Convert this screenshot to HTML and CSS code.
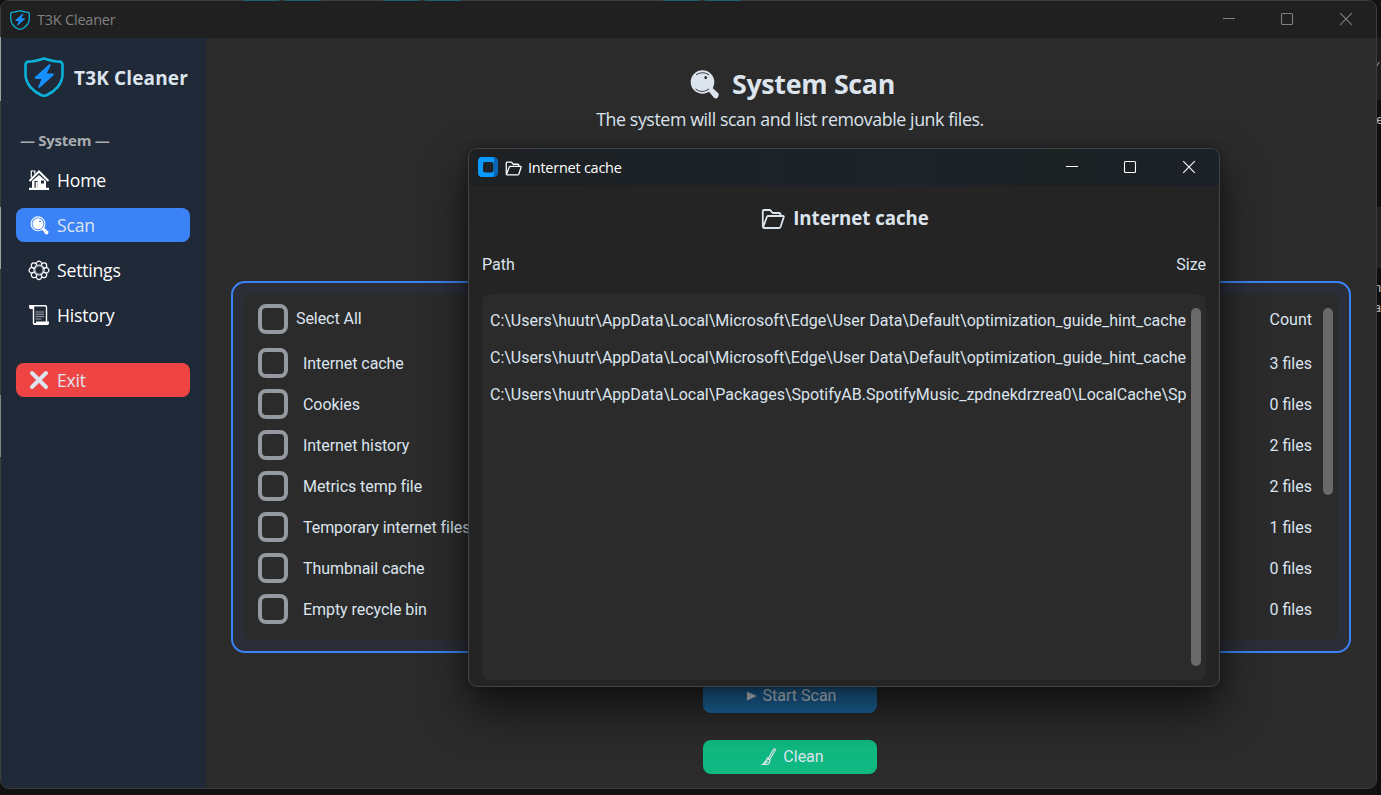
FILE: index.html
```html
<!DOCTYPE html>
<html lang="en">
<head>
<meta charset="utf-8">
<title>T3K Cleaner</title>
<link rel="stylesheet" href="styles.css">
</head>
<body>
<svg width="0" height="0" class="defs">
  <symbol id="shield" viewBox="0 0 40 40">
    <path d="M20 1.4C15 3 9 4.600 4.500 4.600C2.500 4.600 1.500 6 1.500 8v9C1.500 27 9 34.500 17 38q3 1.500 6 0C31 34.500 38.500 27 38.500 17V8c0-2-1-3.400-3-3.400C31 4.600 25 3 20 1.400z" fill="none" stroke="#0bb1d8" stroke-width="2.600"/>
    <path d="M25.500 7L10.500 20.500l1 1.500h6L14 30.500l1.500.6L30 17.800l-.8-1.300h-6.400L26.800 8z" fill="#1690ff"/>
  </symbol>
  <symbol id="glass" viewBox="0 0 30 30">
    <circle cx="12.500" cy="12" r="11.800" fill="currentColor"/>
    <path d="M19 18l2-1.500 7.200 6.700q1.500 2-.2 4t-4 .6l-6-7.200z" fill="currentColor"/>
    <path d="M6 4.800q6.500-4.200 13 0M5.500 19q6.500 5 13.500 0" fill="none" stroke="var(--hole)" stroke-width=".9"/>
    <ellipse cx="15.700" cy="7.600" rx="1.300" ry="1.700" fill="var(--hole)"/>
  </symbol>
  <symbol id="folder" viewBox="0 0 24 20">
    <path d="M1.800 17.500V2.200Q1.800 1 3 1h6l2.800 3H18q1.500 0 1.700 2.500M2 18.500L6 7.800Q6.300 7 7.500 7H22q1 0 .7 1.200L19.500 18q-.4 1-1.500 1H3q-1.200 0-1.200-1.500" fill="none" stroke="currentColor" stroke-width="1.800"/>
  </symbol>
</svg>
<div class="desk-hints"><i></i><i></i><i></i></div>
<div class="left-hints"><i></i><i></i><i></i></div>
<div class="behind"><p class="b1">⁄</p><p class="b2">ne</p><p class="b3">n_<br>a</p></div>

<div class="window">
  <header class="titlebar">
    <svg class="app-icon"><use href="#shield"/></svg>
    <span class="ui app-title">T3K Cleaner</span>
    <div class="controls">
      <svg viewBox="0 0 12 12"><path d="M0 5.500h12"/></svg>
      <svg viewBox="0 0 12 12"><rect x=".5" y=".5" width="11" height="11" rx="1"/></svg>
      <svg viewBox="0 0 12 12"><path d="M.2.2l11.600 11.600M11.800.2L.2 11.800"/></svg>
    </div>
  </header>
  <div class="body">
    <nav class="sidebar ui">
      <div class="brand"><svg class="logo"><use href="#shield"/></svg><b>T3K Cleaner</b></div>
      <div class="section">— System —</div>
      <a class="item"><svg viewBox="0 0 22 22"><path d="M11 6l7 6v7H4v-7z" fill="#fff"/><path d="M1.500 12L11 2.500l9.500 9.500" fill="none" stroke="#fff" stroke-width="2"/><path d="M3.300 8.500V2h3.500v3" fill="none" stroke="#fff" stroke-width="1.200"/><path d="M6.500 12h3v7h-3zM13 11.500h3v3h-3z" fill="#202937"/><path d="M7.700 13h1.800v6H7.700z" fill="#fff"/><path d="M1 18.700h20v2.300H1z" fill="#fff"/></svg><span>Home</span></a>
      <a class="item active"><svg class="small-glass" viewBox="0 0 19 19"><circle cx="8" cy="7.800" r="6.900" fill="none" stroke="currentColor" stroke-width="1.100"/><circle cx="8" cy="7.800" r="5.500" fill="currentColor"/><path d="M11.500 12.800l2-1.600 4.500 4q1 1.300 0 2.500t-2.600.4z" fill="currentColor"/><circle cx="10" cy="5.300" r=".9" fill="#3b82f6"/></svg><span>Scan</span></a>
      <a class="item"><svg viewBox="0 0 22 22"><g fill="none" stroke="#fff" stroke-width="1.200"><circle cx="11" cy="11" r="5"/><circle cx="11" cy="11" r="4" stroke="#99a0aa"/><path d="M8.700 6.300a2.700 2.700 0 1 1 4.600 0a2.700 2.700 0 1 1 3 3a2.700 2.700 0 1 1 0 4a2.700 2.700 0 1 1-3 3a2.700 2.700 0 1 1-4.600 0a2.700 2.700 0 1 1-3-3a2.700 2.700 0 1 1 0-4a2.700 2.700 0 1 1 3-3z"/></g></svg><span>Settings</span></a>
      <a class="item"><svg viewBox="0 0 22 22"><path d="M3 1.700h14q1.500 0 1.500 1.500V18M5.500 2v17.500" fill="none" stroke="#fff" stroke-width="1.400"/><path d="M1 1h4.500v4H2Q1 4 1 1zM8 17.500h13q.4 3.500-2 3.500H6.500q-2 0-1.500-2h3z" fill="#fff"/><path d="M7.500 8h8.500M7.500 10.300h8.500M7.500 12.600h8.500M7.500 15h6" stroke="#a4a9b1" stroke-width="1"/></svg><span>History</span></a>
      <a class="item exit"><svg viewBox="0 0 22 22"><path d="M4 4l14 14M18 4L4 18" stroke="#dce4ee" stroke-width="4" stroke-linecap="round"/></svg><span>Exit</span></a>
    </nav>
    <main class="main">
      <h1 class="ui"><svg><use href="#glass"/></svg><span>System Scan</span></h1>
      <p class="sub ui"><span>The system will scan and list removable junk files.</span></p>
      <section class="panel">
        <div class="list">
          <div class="rows">
            <div class="row head"><i></i><span>Select All</span><em>Count</em></div>
            <div class="row"><i></i><span>Internet cache</span><em>3 files</em></div>
            <div class="row"><i></i><span>Cookies</span><em>0 files</em></div>
            <div class="row"><i></i><span>Internet history</span><em>2 files</em></div>
            <div class="row"><i></i><span>Metrics temp file</span><em>2 files</em></div>
            <div class="row"><i></i><span>Temporary internet files</span><em>1 files</em></div>
            <div class="row"><i></i><span>Thumbnail cache</span><em>0 files</em></div>
            <div class="row"><i></i><span>Empty recycle bin</span><em>0 files</em></div>
          </div>
          <div class="thumb"></div>
        </div>
      </section>
      <button class="btn start"><svg viewBox="0 0 10 10"><path d="M0 .5l10 4.500-10 4.500z"/></svg>Start Scan</button>
      <button class="btn clean"><svg viewBox="0 0 16 18"><path d="M12.500 1.500q1.500-1.200 2 .3L8.500 12 7 11zM6.500 10L9 12q0 3-2.500 4.500H1.500Q5 14 6.500 10zM3.500 16l3-3" fill="none" stroke="currentColor" stroke-width="1.200"/></svg>Clean</button>
    </main>
  </div>
</div>

<div class="dialog">
  <header class="dialog-bar">
    <svg class="ctk" viewBox="0 0 20 20"><rect width="20" height="20" rx="4.500" fill="#0866b5"/><path d="M4.500 0H14q2 0 2 3v14q0 3-2 3H4.500Q0 20 0 15.500v-11Q0 0 4.500 0z" fill="#0a99fe"/><rect x="5" y="5" width="10.500" height="10.500" rx="2" fill="#1c2227"/></svg>
    <svg class="bar-folder"><use href="#folder"/></svg>
    <span class="ui bar-title">Internet cache</span>
    <div class="controls">
      <svg viewBox="0 0 12 12"><path d="M0 5.500h12"/></svg>
      <svg viewBox="0 0 12 12"><rect x=".5" y=".5" width="11" height="11" rx="1"/></svg>
      <svg viewBox="0 0 12 12"><path d="M.2.2l11.600 11.600M11.800.2L.2 11.800"/></svg>
    </div>
  </header>
  <h2 class="ui"><svg><use href="#folder"/></svg><span>Internet cache</span></h2>
  <div class="cols"><span>Path</span><span>Size</span></div>
  <div class="files">
    <div class="paths">
      <p>C:\Users\huutr\AppData\Local\Microsoft\Edge\User Data\Default\optimization_guide_hint_cache</p>
      <p>C:\Users\huutr\AppData\Local\Microsoft\Edge\User Data\Default\optimization_guide_hint_cache</p>
      <p>C:\Users\huutr\AppData\Local\Packages\SpotifyAB.SpotifyMusic_zpdnekdrzrea0\LocalCache\Sp</p>
    </div>
    <div class="thumb"></div>
  </div>
</div>
</body>
</html>
```
FILE: styles.css
```css
* { box-sizing: border-box; }
body { margin: 0; width: 1381px; height: 795px; overflow: hidden; position: relative; background: #121212; color: #dce4ee; font: 16px/20px Roboto, sans-serif; }
h1, h2, p { margin: 0; }
.defs { position: absolute; }
.ui { font-family: "Open Sans", "Noto Sans", sans-serif; white-space: nowrap; }

/* desktop showing around the window edges */
.desk-hints { position: absolute; z-index: 2; top: 0; left: 243px; display: flex; gap: 62px; }
.desk-hints i { width: 78px; height: 1px; background: linear-gradient(90deg, #215e70 36px, #333 36px, #333 42px, #215e70 42px); }
.desk-hints i:last-child { margin-left: 140px; }
.left-hints { position: absolute; z-index: 2; left: 0; top: 37px; width: 1px; display: flex; flex-direction: column; }
.left-hints i { height: 64px; background: #a0a0a0; }
.left-hints i:nth-child(2) { margin-top: 106px; height: 62px; }
.left-hints i:nth-child(3) { margin-top: 126px; height: 62px; background: #858585; }
.behind { position: absolute; left: 1377px; top: 0; width: 4px; height: 795px; overflow: hidden; font-size: 13px; line-height: 20px; color: #b9b9b9; background: linear-gradient(#121212 38px, #1d1d20 38px, #1d1d20 100px, #0e0e0e 100px, #0e0e0e 207px, #222 207px, #222 268px, #0e0e0e 268px); }
.behind p { margin-left: -3px; }
.b1 { padding-top: 56px; }
.behind .b2 { padding-top: 34px; margin-left: -8px; }
.b3 { padding-top: 148px; }

.window { width: 1377px; height: 789px; display: flex; flex-direction: column; border: 1px solid #3d3d3d; border-radius: 9px; background: #2b2b2b; overflow: hidden; position: relative; }
.titlebar { height: 37px; flex: none; display: flex; align-items: center; background: #202020; padding-left: 9px; color: #808080; }
.app-icon { width: 20px; height: 20px; }
.app-title { font-size: 14.500px; margin-left: 7px; letter-spacing: -.22px; }
.controls { margin-left: auto; display: flex; }
.controls svg { width: 12px; height: 12px; fill: none; stroke: currentColor; stroke-width: 1.100; overflow: visible; margin: 0 0 1px 47px; }
.controls svg:nth-child(2) { margin-left: 46px; }
.titlebar .controls, .dialog-bar .controls { margin-right: 24px; }
.body { flex: 1; display: flex; }

.sidebar { width: 205px; flex: none; background: #202937; padding: 17px 16px 0 15px; display: flex; flex-direction: column; }
.brand { display: flex; align-items: center; height: 44px; padding-left: 8px; }
.logo { width: 40px; height: 40px; }
.brand b { font-size: 19px; margin: 2px 0 0 10px; letter-spacing: .15px; color: #dce4ee; }
.section { margin: 31px 0 13px 4px; height: 20px; font-weight: 700; font-size: 15px; letter-spacing: -.27px; color: #a9adb2; }
.item { height: 34px; margin-bottom: 11px; border-radius: 8px; display: flex; align-items: center; padding-left: 12px; color: #fff; font-size: 17.600px; letter-spacing: -.2px; gap: 7px; }
.item svg { width: 22px; height: 22px; flex: none; }
.item .small-glass { width: 19px; height: 19px; margin: 0 1px 0 2px; }
.active { background: #3b82f6; color: #dce4ee; }
.active svg { color: #fff; }
.exit { background: #ef4444; color: #dce4ee; margin-top: 20px; }

.main { flex: 1; min-width: 0; display: flex; flex-direction: column; align-items: center; padding: 27px 27px 0 25px; }
h1 { --hole: #2b2b2b; display: flex; align-items: center; height: 38px; font-size: 26.800px; gap: 12px; letter-spacing: -.3px; padding-left: 5px; }
h1 svg { width: 30px; height: 30px; margin-top: 1px; }
.sub { height: 30px; line-height: 32px; font-size: 17.800px; letter-spacing: -.42px; }
.panel { width: 1120px; flex: none; height: 372px; margin-top: 148px; align-self: flex-start; border: 2px solid #3b82f6; border-radius: 14px; background: #2b2e37; padding: 11px; }
.list { height: 346px; background: #2b2b2b; border-radius: 8px; padding: 10px 5px 0 14px; display: flex; }
.rows { flex: 1; }
.row { height: 41px; display: flex; align-items: flex-start; line-height: 32px; letter-spacing: -.06px; }
.row.head { height: 44px; }
.row i { width: 30px; height: 30px; border: 4px solid #949a9f; border-radius: 8px; }
.row span { margin-left: 15px; }
.row.head span { margin-left: 8px; line-height: 29px; }
.row em { font-style: normal; letter-spacing: 0; margin-left: auto; margin-right: 11px; }
.thumb { width: 10px; border-radius: 5px; background: #696969; }
.list .thumb { height: 187px; margin-top: 4px; }
.btn { width: 174px; height: 34px; flex: none; border: 0; border-radius: 8px; color: #dce4ee; font: 16px/20px Roboto, sans-serif; display: flex; align-items: center; justify-content: center; }
.start { background: #1f6aa5; margin-top: 26px; gap: 6px; padding-left: 9px; }
.start svg { width: 10px; height: 10px; fill: currentColor; }
.clean { background: #10b981; margin-top: 27px; gap: 6px; padding-left: 11px; }
.clean svg { width: 16px; height: 18px; }

.dialog { position: absolute; left: 468px; top: 148px; width: 752px; height: 539px; border: 1px solid #434445; border-radius: 9px; background: #242424; box-shadow: 0 22px 44px rgba(0,0,0,.62), 0 0 10px rgba(0,0,0,.3); overflow: hidden; display: flex; flex-direction: column; }
.dialog-bar { height: 37px; flex: none; background: linear-gradient(90deg, #1d2124, #1c2329 60%, #1c2124 78%, #1b2127); display: flex; align-items: center; padding-left: 9px; color: #fff; }
.ctk { width: 20px; height: 20px; margin-bottom: 1px; }
.bar-folder { width: 17px; height: 15px; margin: 2px 0 0 7px; }
.bar-title { font-size: 14.500px; margin-left: 6px; letter-spacing: -.25px; }
h2 { display: flex; align-items: center; justify-content: center; height: 66px; font-size: 18.700px; gap: 8px; letter-spacing: -.05px; padding-left: 2px; }
h2 span { margin-bottom: 2px; }
h2 svg { width: 24px; height: 20px; }
.cols { display: flex; justify-content: space-between; padding: 2px 13px 0; height: 42px; line-height: 21px; }
.files { height: 386px; margin: 0 13px; border-radius: 8px; background: #2b2b2b; display: flex; padding: 14px 5px 0 8px; }
.paths { flex: 1; min-width: 0; overflow: hidden; margin-right: 4px; }
.paths p { white-space: nowrap; height: 37px; line-height: 26px; }
.files .thumb { height: 358px; flex: none; }
```
